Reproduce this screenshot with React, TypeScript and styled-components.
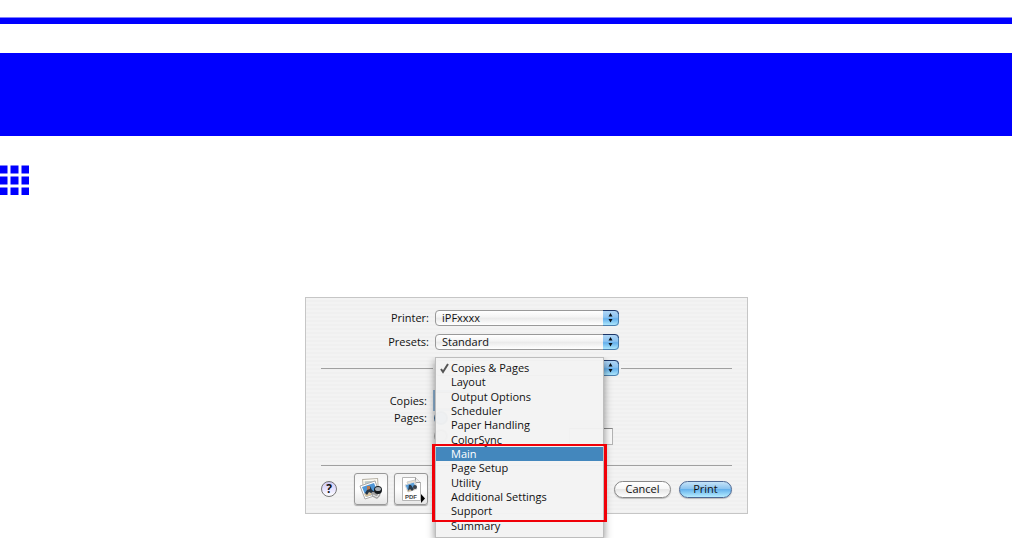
import React, { useState } from "react";
import styled, { createGlobalStyle, css } from "styled-components";

const GlobalStyle = createGlobalStyle`
  *, *::before, *::after { box-sizing: border-box; }
  body {
    margin: 0;
    background: #fff;
    color: #111;
    font-family: "Open Sans", "Noto Sans", sans-serif;
    font-size: 11px;
    line-height: 14px;
  }
  button, input, select { font: inherit; color: inherit; margin: 0; }
`;

const Page = styled.main`
  padding-top: 17px;
`;

const TopRule = styled.div`
  height: 7px;
  background: #00f;
  border-top: 1px solid #8080ff;
`;

const Banner = styled.header`
  height: 83px;
  margin-top: 29px;
  background: #00f;
`;

const SectionMark = styled.svg`
  display: block;
  margin-top: 29px;
`;

const Figure = styled.div`
  display: flex;
  justify-content: center;
  margin-top: 102px;
  padding: 0 0 24px 41px;
`;

const Dialog = styled.form`
  width: 443px;
  padding: 12px 15px 8px;
  border: 1px solid #c6c6c6;
  background: repeating-linear-gradient(#f3f3f3 0 2px, #f0f0f0 2px 4px);
`;

const Row = styled.div<{ $top?: number }>`
  display: grid;
  grid-template-columns: 112px 184px 1fr;
  column-gap: 2px;
  align-items: center;
  height: 16px;
  margin-top: ${(p) => p.$top ?? 0}px;
`;

const Label = styled.label<{ $inset?: number }>`
  padding-right: ${(p) => p.$inset ?? 4}px;
  text-align: right;
`;

const Line = styled.hr<{ $top?: number }>`
  width: 100%;
  height: 1px;
  margin: ${(p) => p.$top ?? 0}px 0 0;
  border: 0;
  background: #a0a0a0;
`;

const Popup = styled.div`
  position: relative;
  height: 16px;
`;

const Select = styled.select`
  appearance: none;
  display: block;
  width: 100%;
  height: 16px;
  padding: 0 20px 0 6px;
  border: 1px solid #999;
  border-radius: 4px;
  outline: 0;
  background: linear-gradient(#fff 0%, #f3f3f3 45%, #e9e9e9 50%, #fff 100%);
  line-height: 14px;
`;

const Arrows = styled.svg`
  position: absolute;
  top: 0;
  right: 0;
  pointer-events: none;
`;

const Menu = styled.ul`
  position: absolute;
  z-index: 2;
  top: -3px;
  left: 0;
  display: grid;
  grid-template-rows: repeat(12, 1fr);
  width: 169px;
  height: 181px;
  margin: 0;
  padding: 3px 0 4px;
  border: 1px solid #bdbdbd;
  background: rgba(243, 243, 243, 0.97);
  box-shadow: 0 4px 8px rgba(0, 0, 0, 0.45);
  clip-path: inset(0 -10px 0 -10px);
  list-style: none;
`;

const MenuItem = styled.li<{ $active: boolean }>`
  position: relative;
  display: flex;
  align-items: center;
  background: ${(p) => (p.$active ? "#4387bd" : "transparent")};
  color: ${(p) => (p.$active ? "#fff" : "inherit")};
`;

const MenuButton = styled.button`
  width: 100%;
  height: 100%;
  padding: 0 0 0 15px;
  border: 0;
  outline: 0;
  background: none;
  line-height: 14px;
  text-align: left;
`;

const Tick = styled.svg`
  position: absolute;
  top: 2px;
  left: 4px;
`;

const Callout = styled.div`
  position: absolute;
  z-index: 3;
  top: 84px;
  left: -3px;
  width: 175px;
  height: 78px;
  border: solid #f00008;
  border-width: 2px 3px;
  pointer-events: none;
`;

const Options = styled.div`
  display: flex;
  align-items: center;
  gap: 4px;
`;

const field = css`
  height: 17px;
  padding: 0 3px;
  border: 1px solid #b4b4b4;
  border-top-color: #888;
  outline: 0;
  background: #fafafa;
`;

const CopiesInput = styled.input`
  ${field}
  width: 40px;
  box-shadow: 0 0 0 2px #8fb4d6;
`;

const RangeInput = styled.input`
  ${field}
  width: 44px;
  margin-left: auto;
`;

const RangeRow = styled(Options)`
  width: 178px;
  height: 16px;
`;

const Radio = styled.input`
  appearance: none;
  width: 12px;
  height: 12px;
  border: 1px solid #888;
  border-radius: 50%;
  background: #ddd;
  box-shadow: 0 0 0 1px #aaa;
  &:checked { border-color: #244f7c; background: #6caade; box-shadow: 0 0 0 1px #3d6a94; }
`;

const Footer = styled.footer`
  display: flex;
  align-items: center;
  margin-top: 7px;
`;

const HelpButton = styled.button`
  width: 16px;
  height: 16px;
  padding: 0;
  border: 1px solid #777;
  border-radius: 50%;
  background: linear-gradient(#cfcaf2, #e6e2ff 50%, #fff);
  font-size: 12px;
  font-weight: 700;
  line-height: 14px;
`;

const ToolButton = styled.button<{ $left: number }>`
  width: 34px;
  height: 32px;
  margin-left: ${(p) => p.$left}px;
  padding: 0;
  border: 1px solid #999;
  border-radius: 3px;
  background: linear-gradient(#f4f4f4, #fff 50%, #e6e6e6);
  box-shadow: 0 1px 1px #aaa;
  svg { display: block; }
`;

const Actions = styled.div`
  display: flex;
  gap: 8px;
  margin-left: auto;
`;

const PushButton = styled.button<{ $primary?: boolean }>`
  width: ${(p) => (p.$primary ? 53 : 57)}px;
  height: 17px;
  padding: 0;
  border: 1px solid ${(p) => (p.$primary ? "#4d6894" : "#888")};
  border-radius: 9px;
  background: ${(p) =>
    p.$primary
      ? "linear-gradient(#c5e3f8, #8cc4f0 45%, #66b2ec 50%, #b5ecff)"
      : "linear-gradient(#fff, #f6f6f6 45%, #e6e6e6 50%, #fff)"};
  box-shadow: 0 1px 1px #bbb;
  font-weight: ${(p) => (p.$primary ? 500 : 400)};
  line-height: 14px;
`;

const panes = [
  "Copies & Pages", "Layout", "Output Options", "Scheduler",
  "Paper Handling", "ColorSync", "Main", "Page Setup",
  "Utility", "Additional Settings", "Support", "Summary",
];

function PopupArrows() {
  return (
    <Arrows width="16" height="16" viewBox="0 0 16 16" aria-hidden="true">
      <defs>
        <linearGradient id="aqua" x1="0" y1="0" x2="0" y2="1">
          <stop offset="0" stopColor="#b5d8f5" />
          <stop offset=".45" stopColor="#8cc3f1" />
          <stop offset=".55" stopColor="#65b0ec" />
          <stop offset="1" stopColor="#b8efff" />
        </linearGradient>
      </defs>
      <path d="M0 0H12Q16 0 16 4V12Q16 16 12 16H0Z" fill="url(#aqua)" />
      <path d="M0 .5H12Q15.5.5 15.5 4" fill="none" stroke="#1d3566" />
      <path d="M15.5 4V12Q15.5 15.5 12 15.5H0" fill="none" stroke="#4c7fae" />
      <path d="M7.5 3L9.5 6.5H5.5ZM7.5 12.5L9.500 9H5.5Z" fill="#081018" />
    </Arrows>
  );
}

function PreviewIcon() {
  return (
    <svg width="32" height="30" viewBox="0 0 32 30" aria-hidden="true">
      <g transform="rotate(-4 16 11)">
        <path d="M8 5H23V18H8Z" fill="#fffdf5" stroke="#b5b0a4" />
        <path d="M10 7H21V14H10Z" fill="#dccbb0" />
        <path d="M10 7H21V9H10Z" fill="#b9c8cb" />
      </g>
      <path d="M5 12L20 7L25 20L10 25Z" fill="#fff" stroke="#aaa" />
      <path d="M7 13L19 9L23 19L11 23Z" fill="#4f96d6" />
      <path d="M9 20L14 17L23 18V19L11 23Z" fill="#d8c4a1" />
      <path d="M12 13L15 12L17 16L20 18L18 20L14 18L12 21L10 19L12 16Z" fill="#263444" />
      <path d="M12 12L15 12L15 15L12 16Z" fill="#b97b53" />
      <path d="M17 18H26L25 22L22 25L18 23L16 20Z" fill="#a2a2a2" />
      <path d="M18 21L22 23L24 20" fill="none" stroke="#eee" />
      <ellipse cx="23" cy="16" rx="4" ry="4" fill="#15191d" />
      <ellipse cx="23" cy="15" rx="3" ry="2" fill="#a7afb6" />
    </svg>
  );
}

function PdfIcon() {
  return (
    <svg width="32" height="30" viewBox="0 0 32 30" aria-hidden="true">
      <path d="M7.500 3.5H20.5L25.500 8.500V26.5H7.500Z" fill="#fff" stroke="#b5b5b5" />
      <path d="M20.5 3.500V8.500H25.5" fill="#ececec" stroke="#999" />
      <path d="M12 8L20 6L21 11L14 13Z" fill="#eee2cc" stroke="#ccc" />
      <path d="M10 11L19 8L22 15L13 18Z" fill="#5c9fd8" stroke="#ddd" />
      <path d="M12 16L19 14L21 15L13 18Z" fill="#d3bd9d" />
      <path d="M14 11L16 11L18 14L19 15L17 17L15 15L13 17Z" fill="#29394a" />
      <circle cx="20" cy="13" r="2" fill="#3b434b" />
      <text x="16" y="25" textAnchor="middle" fontFamily="Liberation Sans, sans-serif" fontSize="6" fontWeight="700" fill="#444">PDF</text>
      <path d="M26 20L30 24.5L26 29Z" fill="#000" />
    </svg>
  );
}

export default function App() {
  const [active, setActive] = useState("Main");

  return (
    <>
      <GlobalStyle />
      <Page>
        <TopRule />
        <Banner />
        <SectionMark width="29" height="30" viewBox="0 0 29 30" fill="#00f" aria-hidden="true">
          {[0.5, 11.5, 22.5].map((y) => (
            <g key={y}>
              <rect x="-.5" y={y} width="8" height="8" />
              <rect x="10.5" y={y} width="8" height="8" />
              <rect x="21.5" y={y} width="8" height="8" />
            </g>
          ))}
        </SectionMark>
        <Figure>
          <Dialog onSubmit={(e) => e.preventDefault()}>
            <Row>
              <Label htmlFor="printer">Printer:</Label>
              <Popup>
                <Select id="printer"><option>iPFxxxx</option></Select>
                <PopupArrows />
              </Popup>
            </Row>
            <Row $top={8}>
              <Label htmlFor="presets">Presets:</Label>
              <Popup>
                <Select id="presets"><option>Standard</option></Select>
                <PopupArrows />
              </Popup>
            </Row>
            <Row $top={10}>
              <Line />
              <Popup>
                <Select aria-label="Print options" />
                <PopupArrows />
                <Menu>
                  {panes.map((name, i) => (
                    <MenuItem key={name} $active={name === active}>
                      {i === 0 && (
                        <Tick width="10" height="11" viewBox="0 0 10 11" aria-hidden="true">
                          <path d="M1 6L3 9L8 1" fill="none" stroke="#555" strokeWidth="2" />
                        </Tick>
                      )}
                      <MenuButton type="button" onMouseEnter={() => setActive(name)}>{name}</MenuButton>
                    </MenuItem>
                  ))}
                </Menu>
                <Callout />
              </Popup>
              <Line />
            </Row>
            <Row $top={16}>
              <Label htmlFor="copies" $inset={6}>Copies:</Label>
              <Options>
                <CopiesInput id="copies" />
              </Options>
            </Row>
            <Row $top={2}>
              <Label htmlFor="all" $inset={6}>Pages:</Label>
              <Options>
                <Radio id="all" type="radio" name="pages" defaultChecked />
              </Options>
            </Row>
            <Row $top={2}>
              <span />
              <RangeRow>
                <Radio aria-label="Page range" type="radio" name="pages" />
                <RangeInput aria-label="Last page" />
              </RangeRow>
            </Row>
            <Line $top={21} />
            <Footer>
              <HelpButton type="button" aria-label="Help">?</HelpButton>
              <ToolButton type="button" aria-label="Preview" $left={17}><PreviewIcon /></ToolButton>
              <ToolButton type="button" aria-label="PDF" $left={6}><PdfIcon /></ToolButton>
              <Actions>
                <PushButton type="button">Cancel</PushButton>
                <PushButton type="submit" $primary>Print</PushButton>
              </Actions>
            </Footer>
          </Dialog>
        </Figure>
      </Page>
    </>
  );
}
